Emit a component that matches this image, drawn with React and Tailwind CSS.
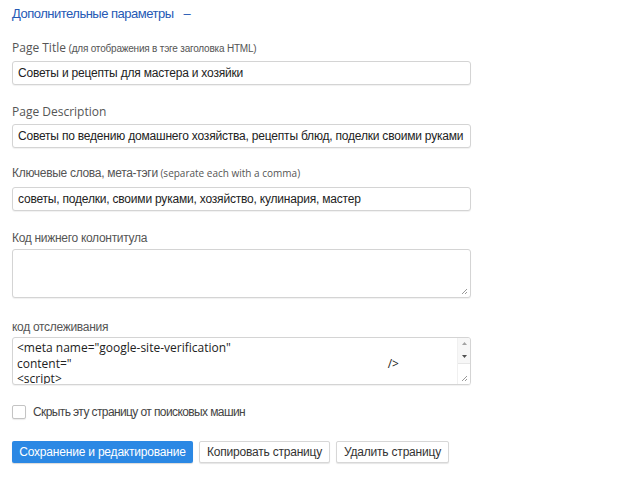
import React from 'react';

const LABEL_FONT = { fontFamily: '"Open Sans", "Noto Sans", sans-serif' };
const FIELD_FONT = { fontFamily: '"Liberation Sans", Arial, sans-serif' };

function Label({ children, hint, cyr = false, className = '' }) {
  return (
    <div
      className={`text-[12px] leading-[16px] text-[#555] ${cyr ? 'tracking-[-0.3px]' : ''} ${className}`}
      style={cyr ? FIELD_FONT : LABEL_FONT}
    >
      {children}
      {hint ? <span className="text-[10px] tracking-normal text-[#555]"> {hint}</span> : null}
    </div>
  );
}

function TextInput({ value, className = '' }) {
  return (
    <input
      type="text"
      readOnly
      value={value}
      className={`block h-[24px] w-[459px] rounded-[3px] border border-[#d4d4d4] bg-white px-[5px] text-[12px] tracking-[-0.2px] text-[#222] shadow-[0_1px_1px_rgba(0,0,0,0.06)] outline-none ${className}`}
      style={FIELD_FONT}
    />
  );
}

function Grip() {
  return (
    <svg width="7" height="7" viewBox="0 0 7 7" className="absolute bottom-[2px] right-[2px]">
      <path d="M6 1 L1 6 M6 4 L4 6" stroke="#999" strokeWidth="1" fill="none" />
    </svg>
  );
}

export default function App() {
  return (
    <div className="min-h-[480px] w-[620px] bg-white pl-[12px]">
      <div className="flex h-[26px] items-center pt-[1px] text-[13px] tracking-[-0.5px] text-[#2559b5]" style={FIELD_FONT}>
        <span>Дополнительные параметры</span>
        <span className="ml-[10px]">–</span>
      </div>

      <Label className="mt-[14px]">
        Page Title
        <span className="text-[10px] tracking-[-0.2px]" style={FIELD_FONT}> (для отображения в тэге заголовка HTML)</span>
      </Label>
      <TextInput value="Советы и рецепты для мастера и хозяйки" className="mt-[4px]" />

      <Label className="mt-[19px]">Page Description</Label>
      <TextInput
        value="Советы по ведению домашнего хозяйства, рецепты блюд, поделки своими руками"
        className="mt-[4px]"
      />

      <Label cyr className="mt-[17px]">
        Ключевые слова, мета-тэги
        <span className="text-[10px] tracking-normal" style={LABEL_FONT}> (separate each with a comma)</span>
      </Label>
      <TextInput
        value="советы, поделки, своими руками, хозяйство, кулинария, мастер"
        className="mt-[6px]"
      />

      <Label cyr className="mt-[19px]">Код нижнего колонтитула</Label>
      <div className="relative mt-[3px] h-[49px] w-[459px] rounded-[3px] border border-[#d4d4d4] bg-white shadow-[0_1px_1px_rgba(0,0,0,0.06)]">
        <Grip />
      </div>

      <Label cyr className="mt-[21px]">код отслеживания</Label>
      <div className="relative mt-[2px] flex h-[48px] w-[459px] overflow-hidden rounded-[3px] border border-[#d4d4d4] bg-white shadow-[0_1px_1px_rgba(0,0,0,0.06)]">
        <div className="flex-1 overflow-hidden whitespace-nowrap pl-[4px] pt-[2px] text-[12px] leading-[15.5px] text-[#222]" style={LABEL_FONT}>
          <div>&lt;meta name="google-site-verification"</div>
          <div className="flex">
            <span>content="</span>
            <span className="ml-[316px]">/&gt;</span>
          </div>
          <div>&lt;script&gt;</div>
        </div>
        <div className="flex w-[13px] flex-col border-l border-[#f0f0f0] bg-[#f7f7f7]">
          <div className="flex h-[11px] items-center justify-center">
            <svg width="5" height="3" viewBox="0 0 5 3"><path d="M0 3 L2.5 0 L5 3Z" fill="#a3a3a3" /></svg>
          </div>
          <div className="flex h-[14px] items-center justify-center">
            <svg width="5" height="3" viewBox="0 0 5 3"><path d="M0 0 L2.5 3 L5 0Z" fill="#505050" /></svg>
          </div>
          <div className="flex-1 border-t border-[#e6e6e6] bg-white" />
        </div>
        <Grip />
      </div>

      <label className="mt-[18px] flex items-center" style={FIELD_FONT}>
        <span className="block h-[14px] w-[14px] rounded-[2px] border border-[#c4c4c4] bg-white shadow-[0_1px_1px_rgba(0,0,0,0.08)]" />
        <span className="ml-[7px] text-[12px] tracking-[-0.6px] text-[#444]">Скрыть эту страницу от поисковых машин</span>
      </label>

      <div className="mt-[20px] flex gap-[6px] whitespace-nowrap" style={FIELD_FONT}>
        <button
          type="button"
          className="h-[22px] w-[181px] rounded-[2px] bg-[#2b88e4] text-[12px] tracking-[-0.2px] text-white shadow-[0_1px_1px_rgba(0,0,0,0.15)]"
        >
          Сохранение и редактирование
        </button>
        <button
          type="button"
          className="h-[22px] w-[131px] rounded-[2px] border border-[#d7d7d7] bg-white text-[12px] tracking-[-0.2px] text-[#333] shadow-[0_1px_1px_rgba(0,0,0,0.1)]"
        >
          Копировать страницу
        </button>
        <button
          type="button"
          className="h-[22px] w-[113px] rounded-[2px] border border-[#d7d7d7] bg-white text-[12px] tracking-[-0.2px] text-[#333] shadow-[0_1px_1px_rgba(0,0,0,0.1)]"
        >
          Удалить страницу
        </button>
      </div>
    </div>
  );
}
